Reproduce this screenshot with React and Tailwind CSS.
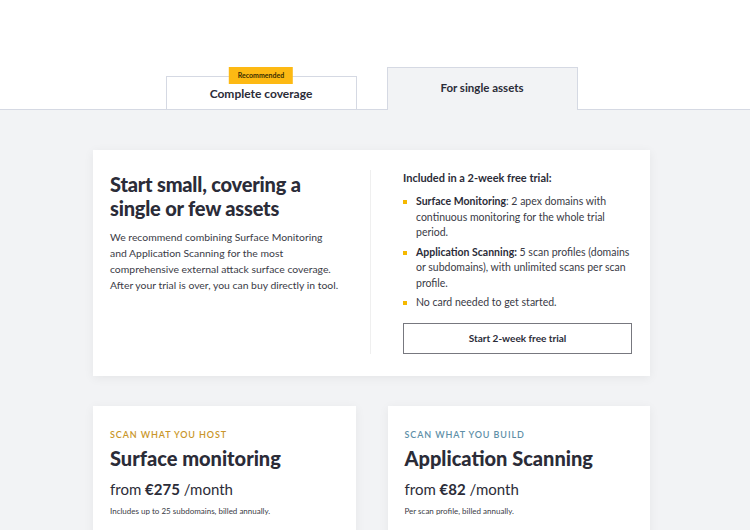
export default function App() {
  return (
    <div className="min-h-[530px] bg-[#f2f3f5] text-[#2b2c38] [font-family:Lato,'Open_Sans',sans-serif]">
      {/* Tabs header */}
      <div className="h-[110px] bg-white border-b border-[#d5d9e3]">
        <div className="w-[557px] ml-[93px] h-full flex items-end justify-center gap-[30px]">
          <div className="relative w-[191px] h-[33px] bg-white border border-b-0 border-[#d5d9e3] flex items-center justify-center">
            <span className="absolute -top-[10px] left-1/2 -translate-x-1/2 bg-[#fdb913] px-[9px] h-[17px] flex items-center text-[7px] font-bold text-[#3a2e00]">
              Recommended
            </span>
            <span className="mt-[2px] text-[12px] font-bold">Complete coverage</span>
          </div>
          <div className="w-[191px] h-[43px] -mb-px bg-[#f2f3f5] border border-b-0 border-[#d5d9e3] flex items-center justify-center">
            <span className="-mt-[2px] text-[11.5px] font-bold">For single assets</span>
          </div>
        </div>
      </div>

      <div className="w-[557px] ml-[93px] pt-[40px]">
        {/* Trial card */}
        <div className="bg-white shadow-[0_2px_10px_rgba(0,0,0,0.06)] flex pt-[20px] pb-[22px] pl-[17px] pr-[18px]">
          <div className="w-[261px] pr-[10px] border-r border-[#efefef]">
            <h1 className="mt-[2px] text-[20px] leading-[24px] font-black tracking-[-0.2px]">
              Start small, covering a<br />single or few assets
            </h1>
            <p className="mt-[9px] text-[10.4px] leading-[16px] text-[#3a3b46]">
              We recommend combining Surface Monitoring
              <br />
              and Application Scanning for the most
              <br />
              comprehensive external attack surface coverage.
              <br />
              After your trial is over, you can buy directly in tool.
            </p>
          </div>
          <div className="flex-1 pl-[32px]">
            <h2 className="text-[11px] leading-[16px] font-bold">Included in a 2-week free trial:</h2>
            <ul className="mt-[8px] flex flex-col gap-[4px] text-[10.5px] leading-[15.5px] text-[#3a3b46]">
              <li className="flex">
                <span className="mt-[6px] w-[4px] h-[4px] bg-[#f5b800] shrink-0 mr-[9px]" />
                <p>
                  <b className="font-bold text-[#2b2c38]">Surface Monitoring</b>: 2 apex domains with
                  continuous monitoring for the whole trial period.
                </p>
              </li>
              <li className="flex">
                <span className="mt-[6px] w-[4px] h-[4px] bg-[#f5b800] shrink-0 mr-[9px]" />
                <p>
                  <b className="font-bold text-[#2b2c38]">Application Scanning:</b> 5 scan profiles
                  (domains or subdomains), with unlimited scans per scan profile.
                </p>
              </li>
              <li className="flex">
                <span className="mt-[6px] w-[4px] h-[4px] bg-[#f5b800] shrink-0 mr-[9px]" />
                <p>No card needed to get started.</p>
              </li>
            </ul>
            <button className="mt-[12px] w-full h-[31px] border border-[#77787f] text-[10px] font-bold">
              Start 2-week free trial
            </button>
          </div>
        </div>

        {/* Product cards */}
        <div className="mt-[30px] grid grid-cols-2 gap-[32px]">
          <div className="bg-white shadow-[0_2px_10px_rgba(0,0,0,0.06)] pl-[17px] pt-[22px] h-[140px]">
            <div className="text-[9px] tracking-[0.9px] text-[#c9962a] font-semibold">SCAN WHAT YOU HOST</div>
            <div className="mt-[4px] text-[20px] font-black leading-[26px]">Surface monitoring</div>
            <div className="mt-[8px] text-[15px] leading-[20px]">
              from <b className="font-bold">€275</b> /month
            </div>
            <div className="mt-[6px] text-[8px] text-[#3a3b46]">Includes up to 25 subdomains, billed annually.</div>
          </div>
          <div className="bg-white shadow-[0_2px_10px_rgba(0,0,0,0.06)] pl-[17px] pt-[22px] h-[140px]">
            <div className="text-[9px] tracking-[0.9px] text-[#5e8fa8] font-semibold">SCAN WHAT YOU BUILD</div>
            <div className="mt-[4px] text-[20px] font-black leading-[26px]">Application Scanning</div>
            <div className="mt-[8px] text-[15px] leading-[20px]">
              from <b className="font-bold">€82</b> /month
            </div>
            <div className="mt-[6px] text-[8px] text-[#3a3b46]">Per scan profile, billed annually.</div>
          </div>
        </div>
      </div>
    </div>
  );
}
